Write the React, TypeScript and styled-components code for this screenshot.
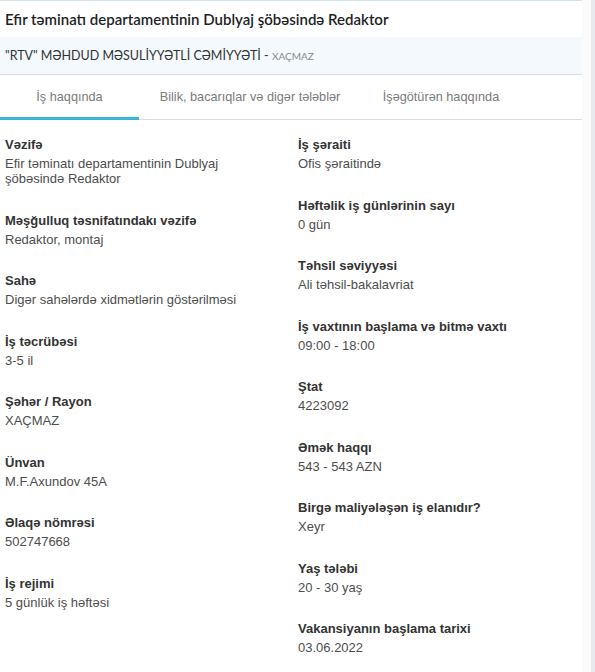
import React from "react";
import styled, { createGlobalStyle } from "styled-components";

const GlobalStyle = createGlobalStyle`
  html, body { margin: 0; padding: 0; background: #ffffff; }
  body { font-family: "Liberation Sans", Arial, sans-serif; }
  * { box-sizing: border-box; }
`;

const Page = styled.div`
  display: flex;
  width: 595px;
  min-height: 672px;
`;

const Card = styled.div`
  width: 582px;
  flex: none;
  background: #ffffff;
  border-top: 1px solid #cfe4f2;
`;

const Gutter = styled.div`
  width: 9px;
  flex: none;
  background: #fbfbfb;
`;

const ScrollTrack = styled.div`
  width: 4px;
  flex: none;
  background: #e8eaed;
`;

const Title = styled.h1`
  margin: 0;
  height: 36px;
  display: flex;
  align-items: center;
  padding: 0 5px;
  font-family: Lato, "Noto Sans", sans-serif;
  font-weight: 600;
  font-size: 15px;
  color: #1f1f1f;
`;

const Company = styled.div`
  height: 38px;
  display: flex;
  align-items: center;
  padding: 0 5px;
  background: #f4f9fd;
  border-bottom: 1px solid #dcdcdc;
  font-family: Lato, "Noto Sans", sans-serif;
  font-size: 12.5px;
  color: #333333;
  white-space: pre;
`;

const City = styled.span`
  font-size: 10px;
  color: #8a8a8a;
`;

const Tabs = styled.div`
  display: flex;
  height: 45px;
  border-bottom: 1px solid #dcdcdc;
`;

const Tab = styled.div<{ $active?: boolean; $w: number }>`
  width: ${(p) => p.$w}px;
  display: flex;
  align-items: center;
  justify-content: center;
  padding-top: 1px;
  font-size: 12.7px;
  color: #7a7a7a;
  border-bottom: 3px solid ${(p) => (p.$active ? "#3ab6d5" : "transparent")};
  margin-bottom: -1px;
`;

const Grid = styled.div`
  display: grid;
  grid-template-columns: 293px 1fr;
  padding: 16px 0 0 5px;
`;

const Column = styled.div`
  display: flex;
  flex-direction: column;
`;

const Item = styled.div`
  margin-bottom: 25.5px;
`;

const Label = styled.div`
  font-size: 13px;
  line-height: 18px;
  font-weight: bold;
  color: #333333;
  margin-bottom: 2px;
`;

const Value = styled.div`
  font-size: 13px;
  line-height: 15px;
  color: #4d4d4d;
`;

const left: [string, string][] = [
  ["Vəzifə", "Efir təminatı departamentinin Dublyaj\nşöbəsində Redaktor"],
  ["Məşğulluq təsnifatındakı vəzifə", "Redaktor, montaj"],
  ["Sahə", "Digər sahələrdə xidmətlərin göstərilməsi"],
  ["İş təcrübəsi", "3-5 il"],
  ["Şəhər / Rayon", "XAÇMAZ"],
  ["Ünvan", "M.F.Axundov 45A"],
  ["Əlaqə nömrəsi", "502747668"],
  ["İş rejimi", "5 günlük iş həftəsi"],
];

const right: [string, string][] = [
  ["İş şəraiti", "Ofis şəraitində"],
  ["Həftəlik iş günlərinin sayı", "0 gün"],
  ["Təhsil səviyyəsi", "Ali təhsil-bakalavriat"],
  ["İş vaxtının başlama və bitmə vaxtı", "09:00 - 18:00"],
  ["Ştat", "4223092"],
  ["Əmək haqqı", "543 - 543 AZN"],
  ["Birgə maliyələşən iş elanıdır?", "Xeyr"],
  ["Yaş tələbi", "20 - 30 yaş"],
  ["Vakansiyanın başlama tarixi", "03.06.2022"],
];

const renderItems = (items: [string, string][]) =>
  items.map(([l, v]) => (
    <Item key={l}>
      <Label>{l}</Label>
      {v.split("\n").map((line) => (
        <Value key={line}>{line}</Value>
      ))}
    </Item>
  ));

export default function App() {
  return (
    <>
      <GlobalStyle />
      <Page>
        <Card>
          <Title>Efir təminatı departamentinin Dublyaj şöbəsində Redaktor</Title>
          <Company>
            {'"RTV" MƏHDUD MƏSULİYYƏTLİ CƏMİYYƏTİ - '}
            <City>XAÇMAZ</City>
          </Company>
          <Tabs>
            <Tab $active $w={139}>İş haqqında</Tab>
            <Tab $w={222}>Bilik, bacarıqlar və digər tələblər</Tab>
            <Tab $w={160}>İşəgötürən haqqında</Tab>
          </Tabs>
          <Grid>
            <Column>{renderItems(left)}</Column>
            <Column>{renderItems(right)}</Column>
          </Grid>
        </Card>
        <Gutter />
        <ScrollTrack />
      </Page>
    </>
  );
}
